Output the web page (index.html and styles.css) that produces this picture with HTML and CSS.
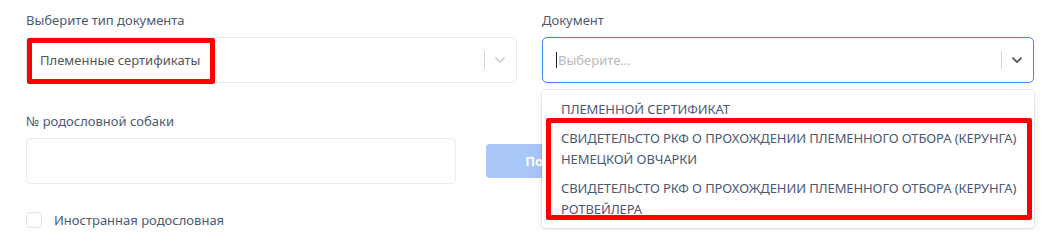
FILE: index.html
```html
<!DOCTYPE html>
<html lang="ru">
<head>
<meta charset="utf-8">
<link rel="stylesheet" href="styles.css">
</head>
<body>
<div class="page">
  <div class="row-top">
    <div class="field">
      <div class="label">Выберите тип документа</div>
      <div class="select select-muted">
        <div class="value">Племенные сертификаты</div>
        <div class="indicators">
          <span class="sep"></span>
          <svg class="chev chev-light" width="10" height="7" viewBox="0 0 10 7"><path d="M1 1.2 5 5.2 9 1.2"/></svg>
        </div>
      </div>
    </div>
    <div class="field">
      <div class="label">Документ</div>
      <div class="select select-focus">
        <div class="value placeholder"><span class="caret"></span>Выберите...</div>
        <div class="indicators">
          <span class="sep"></span>
          <svg class="chev chev-dark" width="10" height="7" viewBox="0 0 10 7"><path d="M1 1.2 5 5.2 9 1.2"/></svg>
        </div>
        <div class="menu">
          <div class="option">ПЛЕМЕННОЙ СЕРТИФИКАТ</div>
          <div class="option">СВИДЕТЕЛЬСТО РКФ О ПРОХОЖДЕНИИ ПЛЕМЕННОГО ОТБОРА (КЕРУНГА) НЕМЕЦКОЙ ОВЧАРКИ</div>
          <div class="option">СВИДЕТЕЛЬСТО РКФ О ПРОХОЖДЕНИИ ПЛЕМЕННОГО ОТБОРА (КЕРУНГА) РОТВЕЙЛЕРА</div>
          <div class="mark mark-menu"></div>
        </div>
      </div>
    </div>
  </div>
  <div class="field field-second">
    <div class="label">№ родословной собаки</div>
    <div class="search-row">
      <div class="input"></div>
      <button class="btn">Поиск</button>
    </div>
  </div>
  <label class="check-row">
    <span class="checkbox"></span>
    <span class="check-label">Иностранная родословная</span>
  </label>
  <div class="mark mark-type"></div>
</div>
</body>
</html>
```
FILE: styles.css
```css
* { box-sizing: border-box; }
html, body { margin: 0; background: #fff; }
body {
  font-family: "Noto Sans", "Open Sans", sans-serif;
  font-size: 13px;
  color: #4a5a75;
}
.page {
  position: relative;
  padding: 10px 14px 0 26px;
}
.row-top {
  display: grid;
  grid-template-columns: 491px 492px;
  column-gap: 25px;
}
.label {
  height: 20px;
  line-height: 20px;
  margin-bottom: 7px;
  color: #4a5a75;
}
.select {
  position: relative;
  height: 46px;
  border: 1px solid #e6ebef;
  border-radius: 5px;
  display: flex;
  align-items: center;
  padding-left: 13px;
}
.select-focus {
  border-color: #3c8cf0;
}
.value {
  flex: 1;
  color: #555;
  display: flex;
  align-items: center;
}
.placeholder { color: #b8b8b8; }
.caret {
  display: inline-block;
  width: 1px;
  height: 16px;
  background: #222;
  margin-right: 1px;
}
.indicators {
  display: flex;
  align-items: center;
  height: 100%;
}
.sep {
  width: 1px;
  height: 18px;
  background: #d4d4d4;
}
.chev {
  margin: 0 11px 0 10px;
  fill: none;
  stroke-width: 1.8;
  stroke-linecap: round;
  stroke-linejoin: round;
}
.chev-light { stroke: #d0d0d0; }
.chev-dark { stroke: #555; }
.menu {
  position: absolute;
  top: 100%;
  left: -1px;
  right: -1px;
  margin-top: 8px;
  background: #fff;
  border-radius: 4px;
  box-shadow: 0 0 0 1px rgba(0,0,0,0.08), 0 4px 11px rgba(0,0,0,0.08);
  padding: 5px 0 4px;
  z-index: 2;
}
.option {
  padding: 4px 8px 4px 19px;
  line-height: 21px;
  color: #4a5a75;
  letter-spacing: -0.1px;
}
.field-second { margin-top: 28px; }
.search-row {
  display: flex;
  align-items: center;
  gap: 30px;
}
.input {
  width: 430px;
  height: 46px;
  border: 1px solid #e6ebef;
  border-radius: 5px;
}
.btn {
  height: 34px;
  width: 120px;
  border: none;
  border-radius: 4px;
  background: #a8c6f8;
  color: #fff;
  font-family: inherit;
  font-weight: 700;
  font-size: 13px;
}
.check-row {
  display: flex;
  align-items: center;
  gap: 12px;
  margin-top: 26px;
  height: 20px;
}
.checkbox {
  width: 16px;
  height: 16px;
  border: 1px solid #dfe4ea;
  border-radius: 4px;
}
.check-label { color: #4a5a75; }
.mark {
  position: absolute;
  border: 5px solid #ff0000;
  border-radius: 2px;
  pointer-events: none;
}
.mark-type {
  left: 27px;
  top: 38px;
  width: 188px;
  height: 46px;
}
.mark-menu {
  left: 4px;
  right: 2px;
  top: 28px;
  height: 102px;
}
```
